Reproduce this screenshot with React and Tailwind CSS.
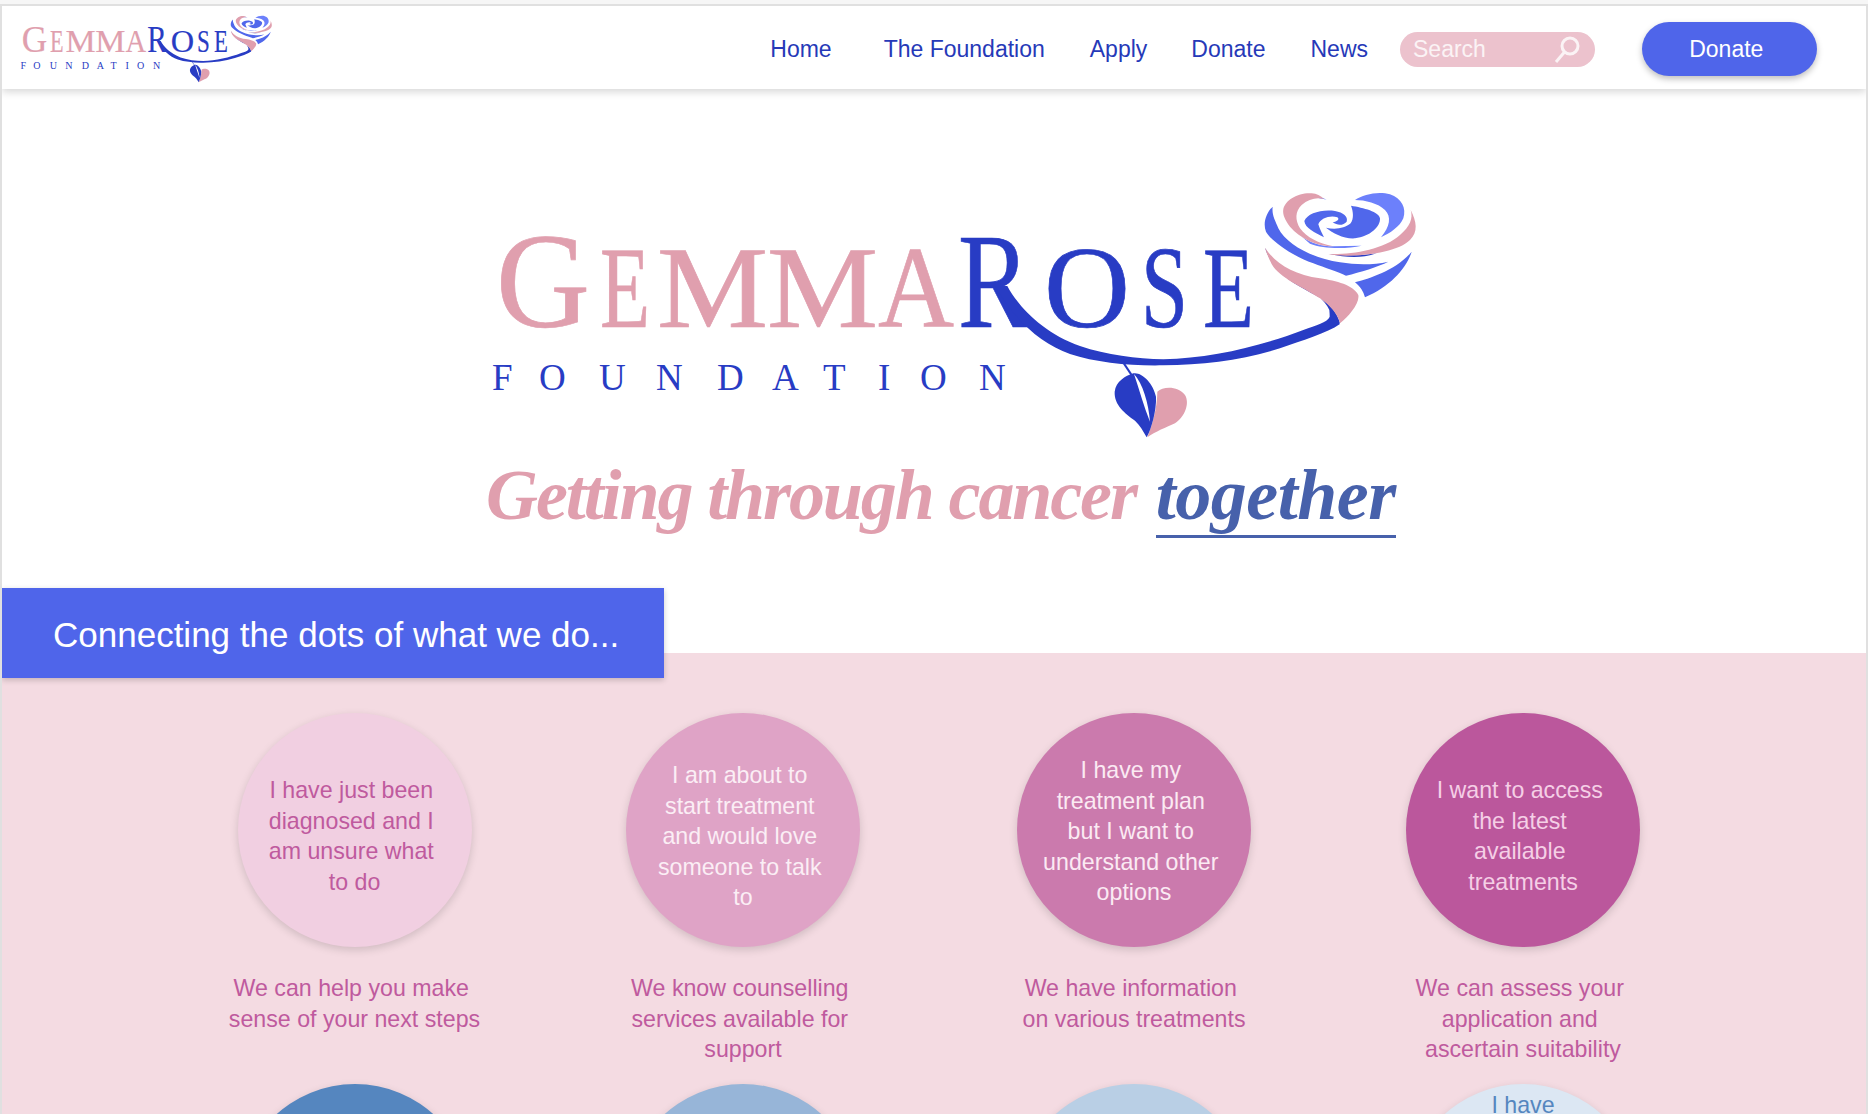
import React from 'react'

const BLUE = '#283cc4'
const ROSE = '#e09fae'
const PETAL = '#5067eb'

const gemma = [
	['G', 496, 94, 136],
	['E', 600, 50, 116],
	['M', 657, 111, 116],
	['M', 767, 111, 116],
	['A', 878, 76, 116],
]
const rose = [
	['R', 958, 72, 136],
	['O', 1044, 86, 116],
	['S', 1141, 47, 116],
	['E', 1203, 51, 116],
]

function Logo({ className }) {
	return (
		<svg viewBox="490 190 930 250" className={className} role="img" aria-label="GemmaRose Foundation">
			<text y="327" fontFamily="'Liberation Serif', serif" strokeWidth="0.7">
				{gemma.map(([c, x, w, s], i) => (
					<tspan key={i} x={x} fontSize={s} fill={ROSE} stroke={ROSE} textLength={w} lengthAdjust="spacingAndGlyphs">{c}</tspan>
				))}
				{rose.map(([c, x, w, s], i) => (
					<tspan key={i} x={x} fontSize={s} fill={BLUE} stroke={BLUE} textLength={w} lengthAdjust="spacingAndGlyphs">{c}</tspan>
				))}
			</text>
			<text y="390" fontFamily="'Liberation Serif', serif" fontSize="37" fill={BLUE} x="492 539 599 656 717 772 823 878 920 979">FOUNDATION</text>

			{/* swoosh */}
			<g transform="translate(950 170) scale(0.3333)">
				<path fill={BLUE} d="M135 348 L172 348 C205 410 280 490 390 528 C470 555 560 566 640 568 C780 565 930 530 1060 480 C1100 465 1130 458 1140 440 L1170 462 C1130 490 1060 510 990 535 C880 570 760 585 640 586 C540 588 440 578 360 552 C270 522 190 445 135 348Z" />
			</g>

			{/* rose head */}
			<g transform="translate(1250 185) scale(0.3333)">
				<path fill={BLUE} d="M45 188 C60 235 95 275 150 300 C190 318 225 345 238 375 C240 395 240 420 232 432 L270 415 C262 380 235 355 205 335 C150 305 85 275 65 225Z" />
				<path fill={ROSE} d="M45 188 C75 235 130 270 210 280 C260 288 310 300 325 330 C330 355 295 395 270 415 C265 390 240 360 210 340 C170 312 100 285 70 245 C60 230 50 205 45 188Z" />
				<path fill={PETAL} d="M68 65 C48 85 38 115 48 140 C60 165 130 215 190 235 C225 248 265 262 288 272 C330 262 385 245 415 230 C370 240 320 240 270 232 C190 220 110 180 85 130 C75 105 65 90 68 65Z" />
				<path fill={PETAL} d="M485 200 C470 250 420 305 345 337 C340 320 332 305 315 292 C360 280 440 255 485 200Z" />
				<path fill="#6c80fb" d="M150 150 C180 175 215 184 250 184 L335 182 C290 192 220 192 180 176Z" />
				<path fill="#6c80fb" d="M170 42 C190 32 212 34 230 45 C210 38 190 38 170 42Z" />
				<path fill={ROSE} d="M100 72 C106 45 145 22 185 25 C200 26 212 32 222 42 C200 36 175 42 155 60 C135 80 135 105 150 130 C170 158 205 175 250 184 C200 184 150 160 120 125 C105 105 97 88 100 72Z" />
				<path fill="#6c80fb" d="M315 45 C340 28 385 18 420 28 C455 40 470 70 460 100 C450 125 420 145 393 157 C420 125 425 95 405 75 C385 55 345 45 315 45Z" />
				<path fill={BLUE} d="M240 208 C290 218 340 220 380 205 C340 212 290 212 240 208Z" />
				<path fill={ROSE} d="M482 75 C500 110 505 140 480 165 C450 195 370 212 290 212 C270 212 250 210 235 207 C300 210 400 195 450 150 C480 125 490 100 482 75Z" />
				<path fill={PETAL} d="M163 108 C172 85 215 72 255 78 C280 82 295 95 290 110 C280 122 262 122 248 112 C262 110 270 102 262 97 C240 90 212 100 205 118 C210 135 218 148 222 157 C195 142 165 130 163 108Z" />
				<path fill={PETAL} d="M303 62 C340 68 388 80 390 100 C392 125 360 155 315 160 C280 162 250 145 228 128 C255 135 285 130 302 115 C312 100 310 80 303 62Z" />
			</g>

			{/* leaf */}
			<g transform="translate(1100 350) scale(0.3333)">
				<path fill={ROSE} d="M172 125 C190 108 235 108 255 135 C270 160 255 200 225 220 C200 232 165 245 142 262 C155 230 172 175 172 125Z" />
				<path fill={BLUE} d="M100 70 C125 65 160 100 168 140 C170 180 155 235 140 262 C130 245 120 225 105 212 C75 190 42 165 44 125 C48 95 75 78 100 70Z" />
				<path fill="#fff" d="M102 72 C128 100 146 160 150 215 C132 170 118 120 102 72Z" />
				<path fill="none" stroke={BLUE} strokeWidth="6" d="M70 38 L98 80" />
			</g>
		</svg>
	)
}

function Navbar() {
	return (
		<header className="relative z-20 flex h-[83px] items-start justify-between bg-white pl-[18px] shadow-[0_3px_8px_rgba(0,0,0,0.16)]">
			<Logo className="mt-[9px] h-[68px] w-[253px]" />
			<div className="flex items-center pt-4 pr-[49px] text-[23px] text-[#2639b8]">
				<nav className="flex">
					<a className="mr-[52px]">Home</a>
					<a className="mr-[45px]">The Foundation</a>
					<a className="mr-[44px]">Apply</a>
					<a className="mr-[45px]">Donate</a>
					<a>News</a>
				</nav>
				<div className="ml-8 flex h-[35px] w-[195px] items-center justify-between rounded-full bg-[#ecc2cd] pr-[14px] pl-[13px] text-[#fbf3f5]">
					<span>Search</span>
					<svg viewBox="0 0 28 28" className="h-[28px] w-[28px]" fill="none" stroke="#fbf3f5" strokeWidth="3">
						<circle cx="17" cy="11" r="8" />
						<path d="M11.5 17 L3 27" />
					</svg>
				</div>
				<button className="ml-[47px] h-[54px] w-[175px] whitespace-pre rounded-full bg-[#4f65ea] text-white shadow-[0_3px_6px_rgba(0,0,0,0.25)]">{'Donate '}</button>
			</div>
		</header>
	)
}

const rows = [
	[
		{ q: 'I have just been\ndiagnosed and I\nam unsure what\nto do', a: 'We can help you make\nsense of your next steps', bg: 'bg-[#f1cfe1]', fg: 'text-[#bf5a9e]', pt: 'pt-[62px]' },
		{ q: 'I am about to\nstart treatment\nand would love\nsomeone to talk\nto', a: 'We know counselling\nservices available for\nsupport', bg: 'bg-[#dfa3c6]', fg: 'text-[#fbeef5]', pt: 'pt-[47px]' },
		{ q: 'I have my\ntreatment plan\nbut I want to\nunderstand other\noptions', a: 'We have information\non various treatments', bg: 'bg-[#cb7aad]', fg: 'text-[#fbeaf3]', pt: 'pt-[42px]' },
		{ q: 'I want to access\nthe latest\navailable\ntreatments', a: 'We can assess your\napplication and\nascertain suitability', bg: 'bg-[#bb579c]', fg: 'text-[#f5cfe6]', pt: 'pt-[62px]' },
	],
	[
		{ q: '', bg: 'bg-[#5586bf]', fg: 'text-white', pt: 'pt-[6px]' },
		{ q: '', bg: 'bg-[#97b5d8]', fg: 'text-white', pt: 'pt-[6px]' },
		{ q: '', bg: 'bg-[#b9cfe5]', fg: 'text-white', pt: 'pt-[6px]' },
		{ q: 'I have', bg: 'bg-[#dce7f3]', fg: 'text-[#5586bf]', pt: 'pt-[6px]' },
	],
]

// lines keep their trailing space, the centring in the picture counts it
const withTrailing = (s) => s.split('\n').join(' \n')

function Step({ step }) {
	return (
		<div className="flex flex-col items-center">
			<div className={`h-[234px] w-[234px] whitespace-pre rounded-full text-center shadow-[0_3px_8px_rgba(0,0,0,0.15)] ${step.bg} ${step.fg} ${step.pt}`}>
				{withTrailing(step.q)}
			</div>
			{step.a && <p className="mt-[26px] h-[93px] whitespace-pre text-center text-[#bf5a9e]">{withTrailing(step.a)}</p>}
		</div>
	)
}

export default function App() {
	return (
		<div className="h-[1114px] overflow-hidden bg-[#f6f6f6] pt-1 font-['Liberation_Sans',Arial,sans-serif]">
			<div className="h-[1110px] overflow-hidden border-x-2 border-t-2 border-[#e0e0e0] bg-white">
				<Navbar />
				<section className="flex h-[564px] flex-col pt-[101px] pl-[488px]">
					<Logo className="h-[250px] w-[930px]" />
					<p className="mt-[19px] -ml-1 font-['Liberation_Serif',serif] text-[72px] font-bold leading-none italic text-[#e09fae]">
						<span className="tracking-[-2.1px]">Getting through cancer </span>
						<span className="ml-[4px] border-b-[3px] border-[#4761ab] tracking-[-0.5px] text-[#4761ab]">together</span>
					</p>
				</section>
				<section className="flow-root bg-[#f4dbe2] text-[23.2px] leading-[30.5px]">
					<div className="relative z-10 -mt-[65px] flex h-[90px] w-[662px] items-center bg-[#4f65ea] pt-[3px] pl-[51px] text-[35px] leading-none text-white shadow-[0_2px_6px_rgba(0,0,0,0.2)]">
						Connecting the dots of what we do...
					</div>
					<div className="mt-[35px] ml-[158px] grid grid-cols-[389px_388px_394px_384px] gap-y-[18px]">
						{rows.flat().map((step, i) => <Step key={i} step={step} />)}
					</div>
				</section>
			</div>
		</div>
	)
}
